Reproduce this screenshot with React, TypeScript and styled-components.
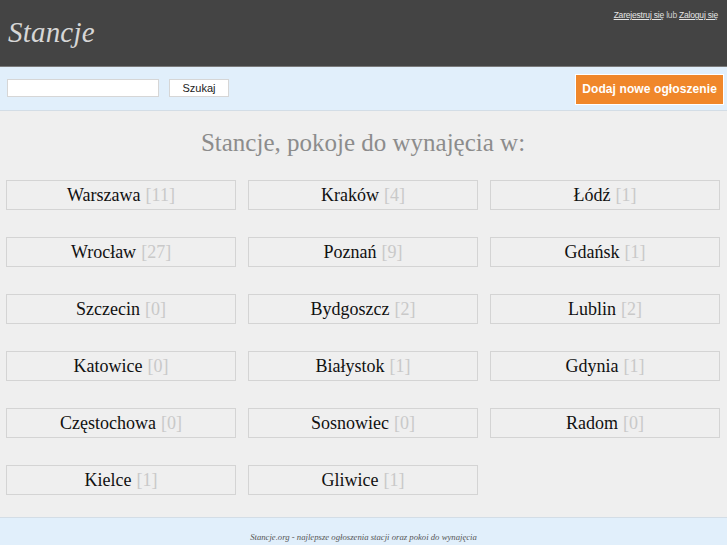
import { createGlobalStyle, styled } from 'styled-components';

const GlobalStyle = createGlobalStyle`
  html, body {
    margin: 0;
    padding: 0;
    background: #efefef;
  }
  body {
    font-family: 'Liberation Serif', 'Times New Roman', serif;
  }
`;

const Header = styled.header`
  height: 66px;
  background: #444444;
  border-bottom: 1px solid #7a7a7a;
  display: flex;
  justify-content: space-between;
  align-items: flex-start;
  padding: 0 9px 0 8px;
`;

const Logo = styled.h1`
  margin: 15px 0 0;
  font-family: 'Liberation Serif', serif;
  font-style: italic;
  font-weight: 400;
  font-size: 29px;
  line-height: 34px;
  color: #d6d6d6;
  letter-spacing: 0.2px;
`;

const UserLinks = styled.div`
  margin-top: 10px;
  font-family: 'Liberation Sans', Arial, sans-serif;
  font-size: 8.5px;
  color: #cfcfcf;
  letter-spacing: -0.2px;
  a {
    color: #e4e4e4;
    text-decoration: underline;
  }
`;

const Toolbar = styled.div`
  height: 43px;
  background: #e1effb;
  border-bottom: 1px solid #d3dde6;
  display: flex;
  align-items: center;
  justify-content: space-between;
  padding: 0 3px 0 7px;
`;

const SearchForm = styled.form`
  display: flex;
  align-items: center;
  gap: 10px;
  margin-top: -2px;
`;

const SearchInput = styled.input`
  box-sizing: border-box;
  width: 152px;
  height: 18px;
  border: 1px solid #d6d6d6;
  background: #ffffff;
  padding: 0 4px;
  outline: none;
`;

const SearchButton = styled.button`
  box-sizing: border-box;
  width: 60px;
  height: 18px;
  border: 1px solid #d6d6d6;
  background: #ffffff;
  font-family: 'Liberation Sans', Arial, sans-serif;
  font-size: 11px;
  color: #222;
  padding: 0;
`;

const AddButton = styled.a`
  box-sizing: border-box;
  height: 31px;
  padding: 0 6px;
  display: flex;
  align-items: center;
  background: #f0872a;
  border: 1px solid #ffffff;
  color: #ffffff;
  font-family: 'Liberation Sans', Arial, sans-serif;
  font-weight: 700;
  font-size: 12px;
  letter-spacing: 0.1px;
  text-decoration: none;
  margin-top: 1px;
`;

const Main = styled.main`
  padding: 17px 7px 22px 6px;
`;

const Title = styled.h2`
  margin: 0 0 22px;
  text-align: center;
  font-family: 'Liberation Serif', serif;
  font-weight: 400;
  font-size: 25px;
  line-height: 30px;
  color: #8c8c8c;
`;

const CityGrid = styled.div`
  display: grid;
  grid-template-columns: repeat(3, 230px);
  column-gap: 12px;
  row-gap: 27px;
`;

const CityBox = styled.a`
  box-sizing: border-box;
  height: 30px;
  border: 1px solid #d4d4d4;
  display: flex;
  align-items: center;
  justify-content: center;
  font-family: 'Liberation Serif', serif;
  font-size: 18px;
  color: #111;
  text-decoration: none;
  padding-top: 1px;
`;

const Count = styled.span`
  color: #c9c9c9;
  margin-left: 5px;
`;

const Footer = styled.footer`
  height: 60px;
  background: #e1effb;
  border-top: 1px solid #d3dde6;
  display: flex;
  justify-content: center;
  padding-top: 14px;
  box-sizing: border-box;
`;

const FooterText = styled.p`
  margin: 0;
  font-family: 'Liberation Serif', serif;
  font-style: italic;
  font-size: 8.7px;
  color: #555;
`;

const cities: [string, number][] = [
  ['Warszawa', 11],
  ['Kraków', 4],
  ['Łódź', 1],
  ['Wrocław', 27],
  ['Poznań', 9],
  ['Gdańsk', 1],
  ['Szczecin', 0],
  ['Bydgoszcz', 2],
  ['Lublin', 2],
  ['Katowice', 0],
  ['Białystok', 1],
  ['Gdynia', 1],
  ['Częstochowa', 0],
  ['Sosnowiec', 0],
  ['Radom', 0],
  ['Kielce', 1],
  ['Gliwice', 1],
];

export default function App() {
  return (
    <>
      <GlobalStyle />
      <Header>
        <Logo>Stancje</Logo>
        <UserLinks>
          <a href="#">Zarejestruj się</a> lub <a href="#">Zaloguj się</a>
        </UserLinks>
      </Header>
      <Toolbar>
        <SearchForm onSubmit={(e) => e.preventDefault()}>
          <SearchInput type="text" />
          <SearchButton type="submit">Szukaj</SearchButton>
        </SearchForm>
        <AddButton href="#">Dodaj nowe ogłoszenie</AddButton>
      </Toolbar>
      <Main>
        <Title>Stancje, pokoje do wynajęcia w:</Title>
        <CityGrid>
          {cities.map(([name, count]) => (
            <CityBox key={name} href="#">
              {name}
              <Count>[{count}]</Count>
            </CityBox>
          ))}
        </CityGrid>
      </Main>
      <Footer>
        <FooterText>Stancje.org - najlepsze ogłoszenia stacji oraz pokoi do wynajęcia</FooterText>
      </Footer>
    </>
  );
}
